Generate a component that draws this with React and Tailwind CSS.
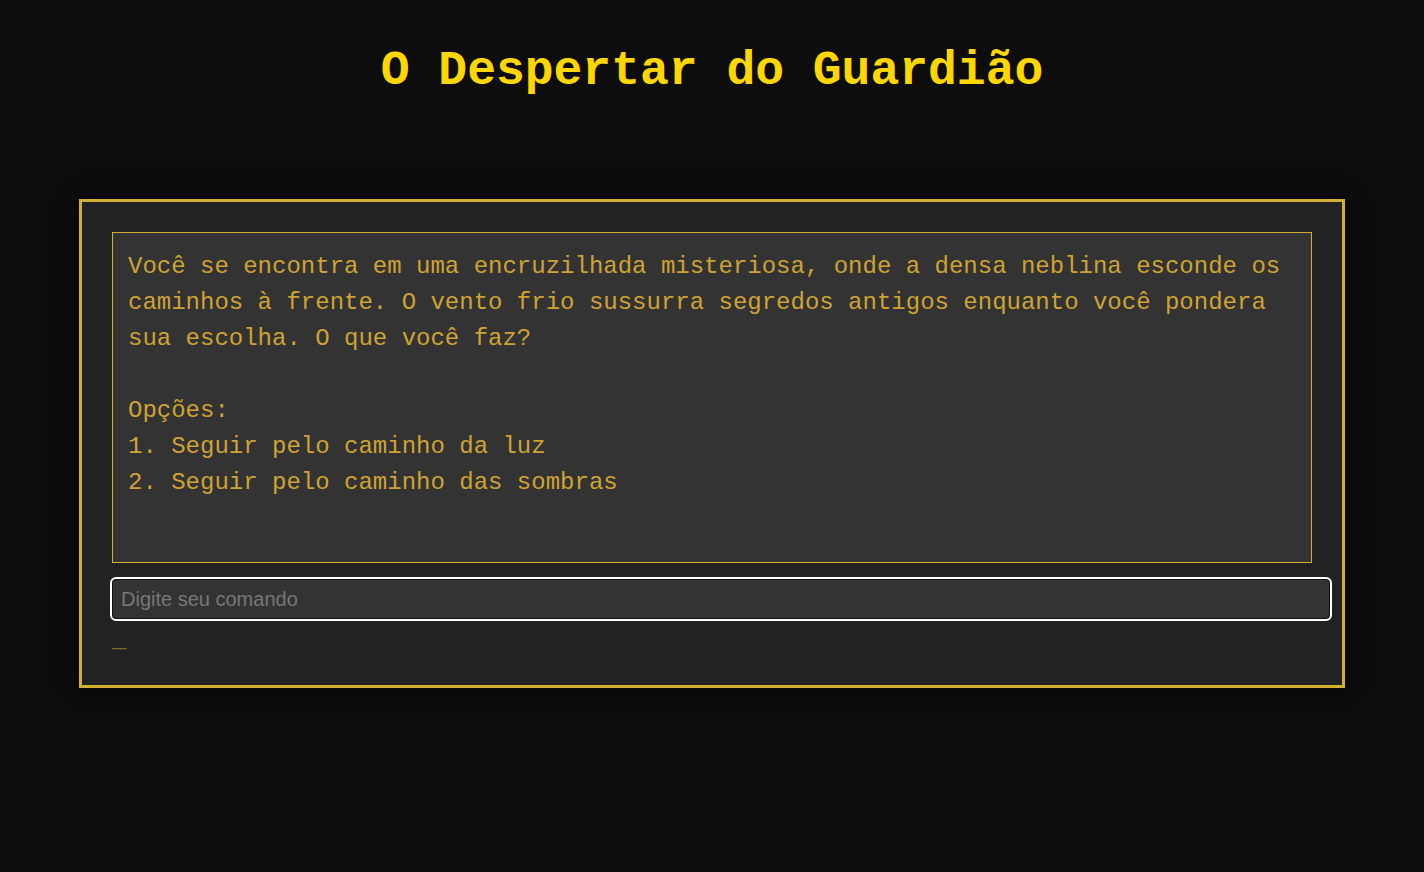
export default function App() {
  return (
    <div className="min-h-[872px] bg-[#0d0d0d] font-['Liberation_Mono','Courier_New',monospace] text-[#d4af37]">
      <h1 className="pt-[44px] text-center text-[48px] font-bold leading-[54px] text-[#ffd700]">
        O Despertar do Guardião
      </h1>

      <div className="mx-auto mt-[101px] w-[1266px] border-[3px] border-[#d4af37] bg-[#222222] p-[30px] shadow-[0_0_20px_rgba(0,0,0,0.6)]">
        <div className="h-[331px] border border-[#d4af37] bg-[#333333] px-[15px] pt-[16px] pb-[12px] text-[24px] leading-[36px] text-[#cfa333] whitespace-pre-wrap">
          {"Você se encontra em uma encruzilhada misteriosa, onde a densa neblina esconde os caminhos à frente. O vento frio sussurra segredos antigos enquanto você pondera sua escolha. O que você faz?\n\nOpções:\n1. Seguir pelo caminho da luz\n2. Seguir pelo caminho das sombras"}
        </div>

        <input
          type="text"
          placeholder="Digite seu comando"
          className="mt-4 box-content h-[38px] w-full rounded-[4px] border border-[#111111] bg-[#333333] px-2 py-0 font-['Liberation_Sans',Arial,sans-serif] text-[20px] text-[#dddddd] outline outline-2 outline-white placeholder:text-[#777777]"
        />

        <div className="mt-1 -mb-1 text-[24px] leading-[36px] text-[#d4af37] opacity-50">_</div>
      </div>
    </div>
  );
}
